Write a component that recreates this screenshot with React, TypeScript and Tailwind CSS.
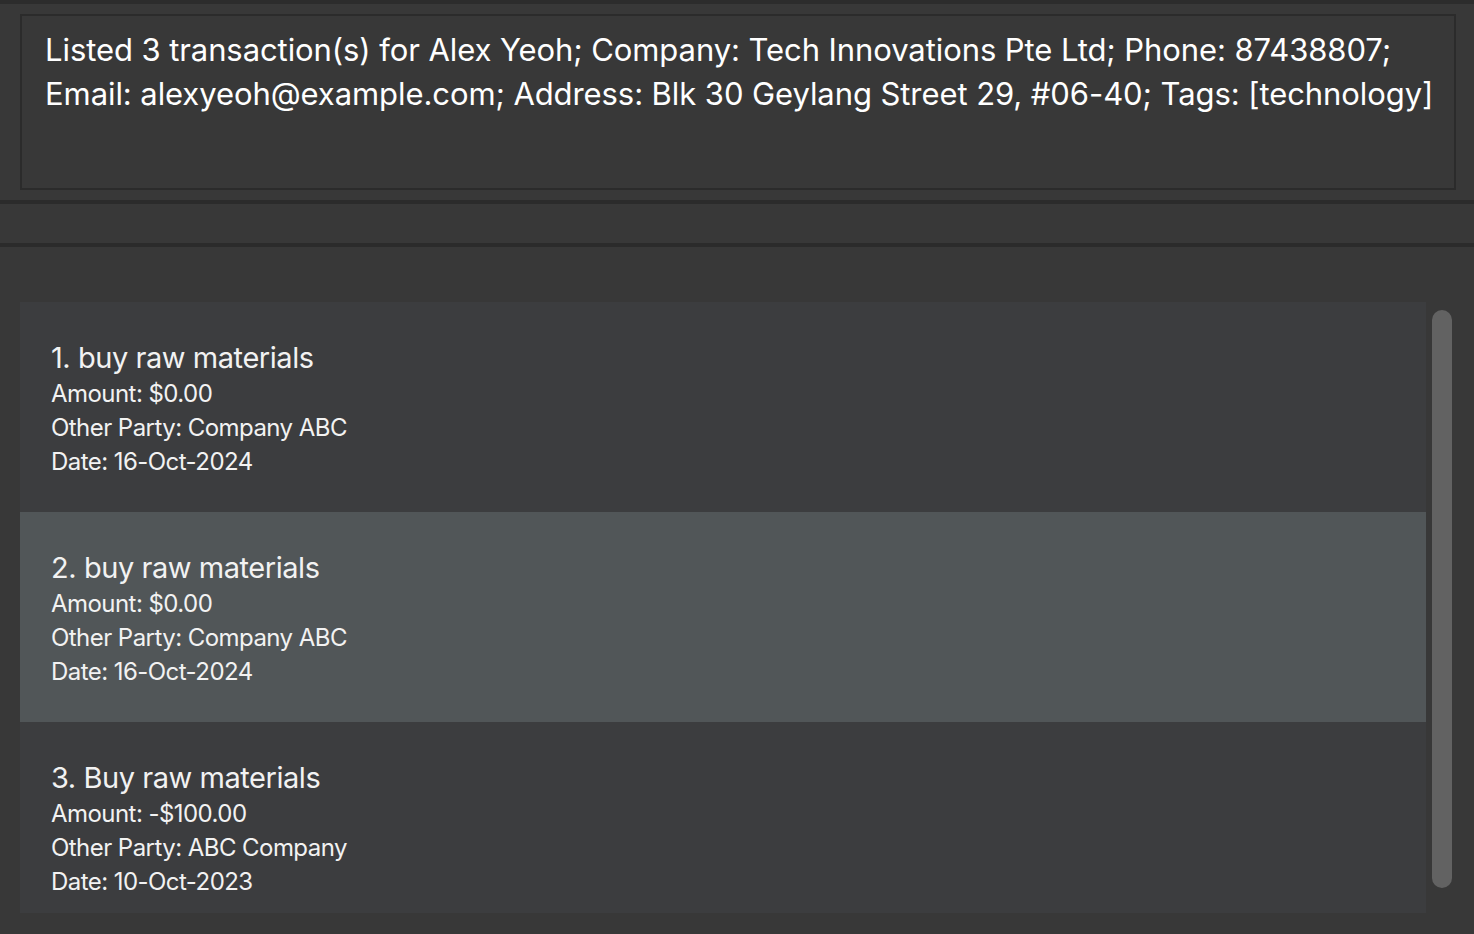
import React from 'react';

interface Transaction {
  title: string;
  amount: string;
  party: string;
  date: string;
}

const transactions: Transaction[] = [
  { title: 'buy raw materials', amount: '$0.00', party: 'Company ABC', date: '16-Oct-2024' },
  { title: 'buy raw materials', amount: '$0.00', party: 'Company ABC', date: '16-Oct-2024' },
  { title: 'Buy raw materials', amount: '-$100.00', party: 'ABC Company', date: '10-Oct-2023' },
];

const TransactionCard: React.FC<{ index: number; tx: Transaction; selected: boolean }> = ({ index, tx, selected }) => (
  <div className={`h-[210px] shrink-0 pl-[31px] pt-[37px] ${selected ? 'bg-[#515658]' : 'bg-[#3c3d3f]'}`}>
    <div className="text-[29px] leading-[38px] tracking-[-0.45px] text-[#f2f2f2]">
      {index}. {tx.title}
    </div>
    <div className="text-[24px] leading-[34px] tracking-[-0.55px] text-[#f2f2f2]">
      <div>Amount: {tx.amount}</div>
      <div>Other Party: {tx.party}</div>
      <div>Date: {tx.date}</div>
    </div>
  </div>
);

export default function App() {
  return (
    <div
      className="w-[1474px] h-[934px] bg-[#383838] flex flex-col overflow-hidden"
      style={{ fontFamily: 'Inter, "Noto Sans", sans-serif' }}
    >
      <div className="h-[4px] bg-[#2c2c2c]" />
      <div className="pt-[10px] pl-[20px] pr-[18px]">
        <div className="h-[176px] border-2 border-[#2b2b2b] bg-[#383838] pl-[23px] pt-[12px] overflow-hidden">
          <p className="text-[31px] leading-[44px] text-white tracking-[-0.08px] whitespace-nowrap">
            Listed 3 transaction(s) for Alex Yeoh; Company: Tech Innovations Pte Ltd; Phone: 87438807;
            <br />
            Email: alexyeoh@example.com; Address: Blk 30 Geylang Street 29, #06-40; Tags: [technology]
          </p>
        </div>
      </div>
      <div className="mt-[10px] h-[4px] bg-[#2b2b2b]" />
      <div className="h-[39px]" />
      <div className="h-[4px] bg-[#2b2b2b]" />
      <div className="flex pl-[20px] pt-[55px]">
        <div className="w-[1406px] h-[611px] overflow-hidden flex flex-col">
          {transactions.map((tx, i) => (
            <TransactionCard key={i} index={i + 1} tx={tx} selected={i === 1} />
          ))}
        </div>
        <div className="ml-[6px] pt-[8px]">
          <div className="w-[20px] h-[578px] rounded-full bg-[#626262]" />
        </div>
      </div>
    </div>
  );
}
